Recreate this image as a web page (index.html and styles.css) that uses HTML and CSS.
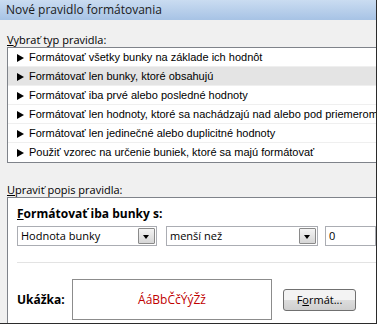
FILE: index.html
```html
<!DOCTYPE html>
<html lang="sk">
  <head>
    <meta charset="UTF-8" />
    <title>Nové pravidlo formátovania</title>
    <link rel="stylesheet" href="styles.css">
  </head>
  <body>
    <div class="okno">
      <div class="titulok">Nové pravidlo formátovania</div>
      <div class="telo">
        <div class="popis"><u>V</u>ybrať typ pravidla:</div>
        <ul class="zoznam">
          <li><span class="sipka"></span>Formátovať všetky bunky na základe ich hodnôt</li>
          <li class="vybrane"><span class="sipka"></span>Formátovať len bunky, ktoré obsahujú</li>
          <li><span class="sipka"></span>Formátovať iba prvé alebo posledné hodnoty</li>
          <li><span class="sipka"></span>Formátovať len hodnoty, ktoré sa nachádzajú nad alebo pod priemerom</li>
          <li><span class="sipka"></span>Formátovať len jedinečné alebo duplicitné hodnoty</li>
          <li><span class="sipka"></span>Použiť vzorec na určenie buniek, ktoré sa majú formátovať</li>
        </ul>

        <div class="popis druhy"><u>U</u>praviť popis pravidla:</div>
        <div class="uprava">
          <div class="nadpis"><u>F</u>ormátovať iba bunky s:</div>
          <div class="riadok">
            <div class="vyber prvy">Hodnota bunky<span class="rozbal"></span></div>
            <div class="vyber druhy-vyber">menší než<span class="rozbal"></span></div>
            <div class="pole">0</div>
          </div>
          <div class="ciara"></div>
          <div class="ukazka">
            <div class="ukazka-popis">Ukážka:</div>
            <div class="ukazka-box">ÁáBbČčÝýŽž</div>
            <button class="tlacidlo">F<u>o</u>rmát...</button>
          </div>
        </div>
      </div>
    </div>
  </body>
</html>
```

FILE: styles.css
```css
body {
  margin: 0;
  background: #ffffff;
  font-family: "Open Sans", "Noto Sans", sans-serif;
  font-size: 11px;
  color: #000;
}

.okno {
  width: 376px;
  height: 323px;
  border-right: 1px solid #2b2b2b;
  border-bottom: 1px solid #2b2b2b;
  background: #f0f0f0;
  overflow: hidden;
}

.titulok {
  height: 20px;
  line-height: 20px;
  padding-left: 6px;
  font-size: 12px;
  color: #1a1a1a;
  background: linear-gradient(#cadcf1, #a7c3e5);
}

.telo {
  padding: 12px 0 0 7px;
}

.popis {
  line-height: 15px;
  height: 15px;
}

.druhy {
  margin-top: 19px;
}

.zoznam {
  list-style: none;
  margin: 0;
  padding: 0;
  background: #fff;
  border: 1px solid #7f838a;
  border-right: none;
}

.zoznam li {
  height: 18px;
  line-height: 18px;
  border-bottom: 1px solid #efefef;
  padding-left: 9px;
  white-space: nowrap;
  font-family: "Liberation Sans", Arial, sans-serif;
  font-size: 11px;
}

.zoznam li:last-child {
  border-bottom: none;
  height: 19px;
}

.zoznam .vybrane {
  background: #e4e4e4;
}

.sipka {
  display: inline-block;
  width: 0;
  height: 0;
  border-left: 7px solid #000;
  border-top: 4px solid transparent;
  border-bottom: 4px solid transparent;
  margin-right: 5px;
  vertical-align: -1px;
}

.uprava {
  background: #fff;
  border: 1px solid #7f838a;
  border-right: none;
  border-bottom: none;
  padding: 8px 0 0 9px;
  height: 200px;
}

.nadpis {
  font-weight: bold;
  font-size: 12px;
  line-height: 15px;
}

.riadok {
  display: flex;
  gap: 9px;
  margin-top: 5px;
}

.vyber,
.pole {
  position: relative;
  height: 18px;
  line-height: 18px;
  border: 1px solid #abadb3;
  padding-left: 3px;
  background: #fff;
}

.prvy {
  width: 135px;
}

.druhy-vyber {
  width: 147px;
  margin-right: -2px;
}

.pole {
  flex: 1;
}

.rozbal {
  position: absolute;
  right: 1px;
  top: 1px;
  width: 15px;
  height: 14px;
  border: 1px solid #8a8a8a;
  border-radius: 1px;
  background: linear-gradient(#f4f4f4, #d6d6d6);
}

.rozbal::after {
  content: "";
  position: absolute;
  left: 4px;
  top: 6px;
  border-left: 3.5px solid transparent;
  border-right: 3.5px solid transparent;
  border-top: 4px solid #000;
}

.ciara {
  height: 1px;
  background: #e3e3e3;
  margin-top: 16px;
}

.ukazka {
  display: flex;
  align-items: center;
  margin-top: 16px;
}

.ukazka-popis {
  width: 55px;
  font-weight: bold;
  font-size: 12px;
}

.ukazka-box {
  width: 198px;
  height: 39px;
  line-height: 39px;
  border: 1px solid #8c8c8c;
  text-align: center;
  color: #c00000;
  font-size: 12px;
}

.tlacidlo {
  margin-left: 11px;
  width: 73px;
  height: 22px;
  padding: 0;
  border: 1px solid #707070;
  border-radius: 3px;
  background: linear-gradient(#f3f3f3 50%, #dddddd 50%, #cfcfcf);
  font-family: "Open Sans", "Noto Sans", sans-serif;
  font-size: 11px;
  color: #000;
}
```
